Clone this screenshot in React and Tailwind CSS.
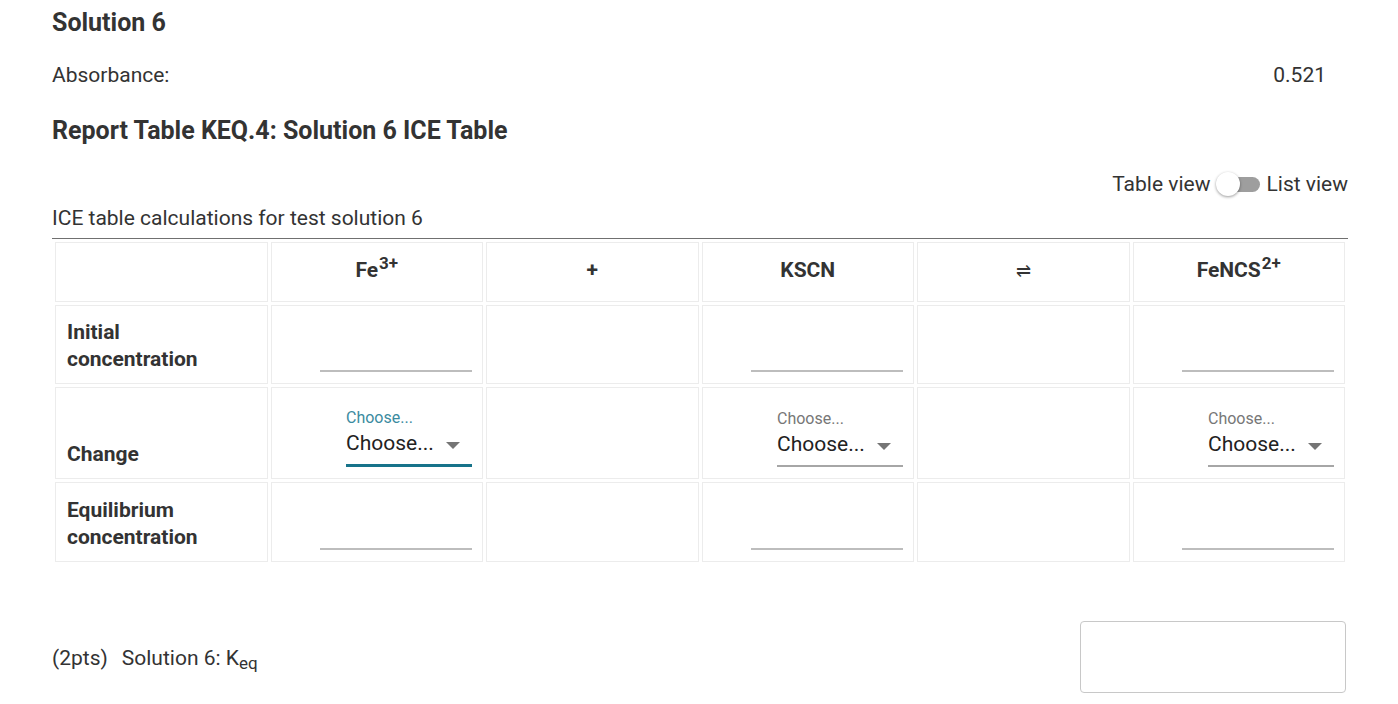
import React from "react";

const FONT = { fontFamily: "Roboto, 'Noto Sans', sans-serif" };

function LineInput() {
  return (
    <div className="flex justify-end">
      <div className="w-[152px] h-[28px] border-b-2 border-[#bdbdbd]" />
    </div>
  );
}

function ChooseSelect({ focused }) {
  return (
    <div className="flex justify-end pr-[10px]">
      <div className={`w-[126px] ${focused ? "border-b-[3px] border-[#17738a]" : "border-b-2 border-[#a6a6a6]"}`}>
        <div className={`text-[16px] leading-[20px] ${focused ? "text-[#3b8ba0]" : "text-[#777]"}`}>Choose...</div>
        <div className="flex items-center justify-between h-[32px] mb-[4px] text-[21px] text-[#222]">
          <span>Choose...</span>
          <svg width="14" height="8" viewBox="0 0 14 8" className="mr-[12px] mt-[4px]">
            <path d="M0 0 L14 0 L7 7 Z" fill="#757575" />
          </svg>
        </div>
      </div>
    </div>
  );
}

const cell = "border border-[#ececec] bg-white";
const label = `${cell} align-bottom pl-[11px] pb-[10px] text-[21px] font-bold leading-[27px] text-[#333]`;

export default function App() {
  const cols = [
    <>Fe<sup className="text-[17px] ml-[1px]">3+</sup></>,
    "+",
    "KSCN",
    <span className="font-normal text-[18px]">⇌</span>,
    <>FeNCS<sup className="text-[17px] ml-[1px]">2+</sup></>,
  ];

  return (
    <div className="min-h-[704px] bg-white text-[#333]" style={FONT}>
      <div className="pl-[52px] pr-[50px]">
        <h2 className="pt-[8px] text-[25px] font-bold leading-[30px] text-[#333]">Solution 6</h2>
        <div className="mt-[24px] flex justify-between pr-[22px] text-[21px] leading-[26px]">
          <span>Absorbance:</span>
          <span>0.521</span>
        </div>
        <h3 className="mt-[27px] text-[25px] font-bold leading-[32px]">Report Table KEQ.4: Solution 6 ICE Table</h3>

        <div className="mt-[24px] flex items-center justify-end text-[21px] leading-[26px]">
          <span>Table view</span>
          <div className="relative mx-[6px] h-[24px] w-[44px] flex items-center">
            <div className="ml-[8px] h-[15px] w-[36px] rounded-full bg-[#9e9e9e]" />
            <div className="absolute left-0 top-0 h-[24px] w-[24px] rounded-full bg-white shadow-[0_1px_3px_rgba(0,0,0,0.4)]" />
          </div>
          <span>List view</span>
        </div>

        <div className="mt-[8px] border-b border-[#707070] pb-[7px] text-[21px] leading-[26px]">
          ICE table calculations for test solution 6
        </div>

        <table className="w-full border-separate border-spacing-[3px] table-fixed">
          <tbody>
            <tr className="h-[60px]">
              <td className={cell} />
              {cols.map((c, i) => (
                <td key={i} className={`${cell} text-center align-middle text-[21px] font-bold pb-[2px]`}>
                  {c}
                </td>
              ))}
            </tr>
            <tr className="h-[79px]">
              <td className={label}>
                Initial<br />concentration
              </td>
              {[0, 1, 2, 3, 4].map((i) => (
                <td key={i} className={`${cell} align-bottom pb-[11px] pr-[10px]`}>
                  {i % 2 === 0 ? <LineInput /> : null}
                </td>
              ))}
            </tr>
            <tr className="h-[92px]">
              <td className={label}>Change</td>
              {[0, 1, 2, 3, 4].map((i) => (
                <td key={i} className={`${cell} align-bottom pb-[11px]`}>
                  {i % 2 === 0 ? <ChooseSelect focused={i === 0} /> : null}
                </td>
              ))}
            </tr>
            <tr className="h-[80px]">
              <td className={label}>
                Equilibrium<br />concentration
              </td>
              {[0, 1, 2, 3, 4].map((i) => (
                <td key={i} className={`${cell} align-bottom pb-[11px] pr-[10px]`}>
                  {i % 2 === 0 ? <LineInput /> : null}
                </td>
              ))}
            </tr>
          </tbody>
        </table>

        <div className="mt-[56px] flex items-center justify-between pr-[2px]">
          <div className="text-[21px] leading-[26px] mt-[1px]">
            <span>(2pts)</span>
            <span className="ml-[14px]">Solution 6: K<sub className="text-[17px]">eq</sub></span>
          </div>
          <div className="h-[72px] w-[266px] rounded-[4px] border border-[#c8c8c8]" />
        </div>
      </div>
    </div>
  );
}
